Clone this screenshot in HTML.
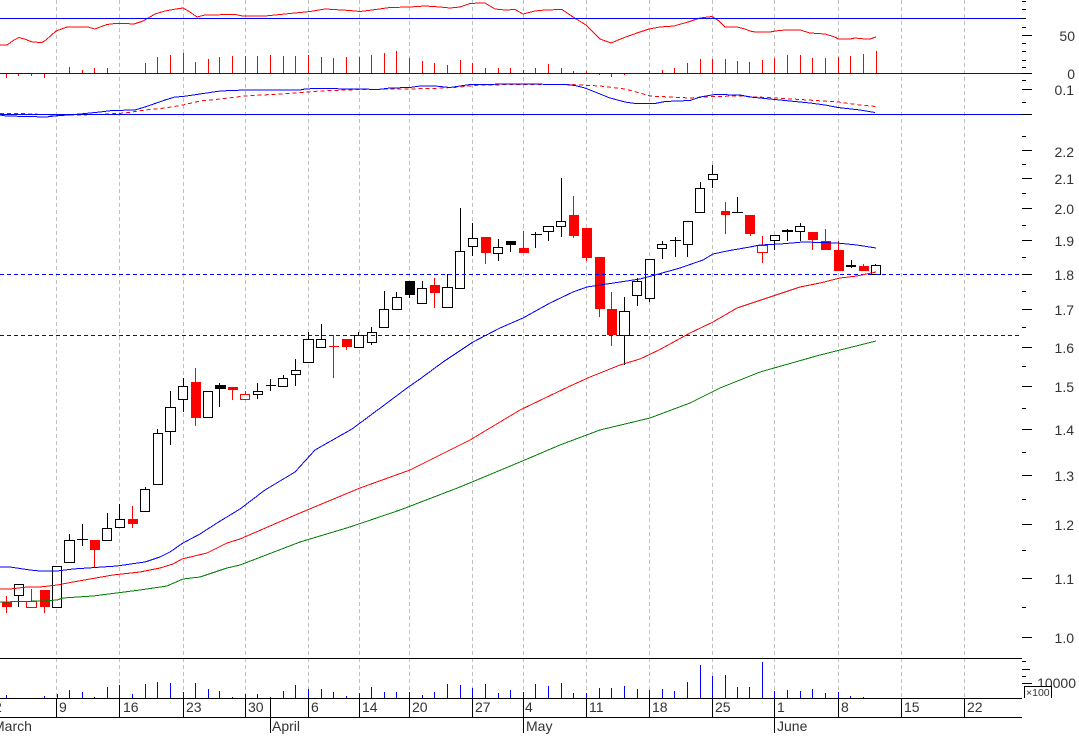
<!DOCTYPE html>
<html>
<head>
<meta charset="utf-8">
<style>
html,body{margin:0;padding:0;background:#fff;width:1079px;height:744px;overflow:hidden}
svg{display:block}
text{font-family:"Liberation Sans",sans-serif;font-size:14px;fill:#333}
</style>
</head>
<body>
<svg width="1079" height="744" viewBox="0 0 1079 744" shape-rendering="crispEdges" fill="none" xmlns="http://www.w3.org/2000/svg">
<!-- grid -->
<path stroke="#c0c0c0" stroke-dasharray="4 3" d="M56.5 0V698M119.5 0V698M183.5 0V698M245.5 0V698M308.5 0V698M359.5 0V698M409.5 0V698M472.5 0V698M523.5 0V698M586.5 0V698M649.5 0V698M712.5 0V698M774.5 0V698M838.5 0V698M901.5 0V698M964.5 0V698"/>
<!-- oscillator bars -->
<path stroke="#f00" d="M6.5 73V78M18.5 73V76M31.5 73V76M44.5 73V78M69.5 73V67M82.5 73V70M94.5 73V68M107.5 73V68M145.5 73V63M157.5 73V57M170.5 73V55M183.5 73V53M195.5 73V62M208.5 73V59M219.5 73V57M232.5 73V56M245.5 73V56M257.5 73V56M270.5 73V55M283.5 73V56M295.5 73V56M308.5 73V55M321.5 73V57M333.5 73V58M346.5 73V57M359.5 73V57M371.5 73V55M384.5 73V53M396.5 73V51M409.5 73V58M422.5 73V61M434.5 73V63M447.5 73V65M460.5 73V60M472.5 73V63M485.5 73V68M498.5 73V68M510.5 73V68M523.5 73V70M535.5 73V68M548.5 73V64M561.5 73V68M573.5 73V71M586.5 73V71M599.5 73V75M611.5 73V77M624.5 73V75M649.5 73V71M662.5 73V70M674.5 73V68M687.5 73V63M700.5 73V59M712.5 73V59M725.5 73V59M737.5 73V61M749.5 73V62M762.5 73V60M774.5 73V58M787.5 73V55M800.5 73V55M812.5 73V58M825.5 73V58M838.5 73V57M850.5 73V56M863.5 73V54M876.5 73V51"/>
<!-- RSI -->
<polyline stroke="#f00" points="0,45 7,45 14,40 19,37.5 26,39.5 32,42 42,42.5 46,40 56,31 67,27 88,27 95,29 107,24.5 115,23.5 125,23.5 134,24 143,21 155,14 165,11 176,9 183,8 190,12 197,17 205,15 235,14.5 243,16 265,16 285,14 310,11.5 325,9 350,10.5 360,11.5 372,10 390,7.5 410,7 425,6 440,7 450,8 460,7 470,3.5 480,3 485,3 495,9 505,10 515,9.5 523,14 535,11 545,10 562,9.5 573,17 586,25 600,39 611,43 623,38 637,33 649,29 660,27 674,26 688,22 700,18 712,16.5 719,21 725,27 737,27 745,29 750,31 755,32 770,32 775,31 785,30 800,30 810,33 825,34 835,37 838,39 850,39 855,38 865,39 870,39 876,37"/>
<!-- MACD -->
<polyline stroke="#f00" stroke-dasharray="4 3" points="0,113.5 20,113.5 55,115 75,115 100,114.5 125,113 145,110 165,108 183,105 200,101 220,99 245,96 280,94 300,92.5 320,91 360,89.5 400,89 435,88.5 460,87 470,86 480,85 520,84.5 570,84.5 600,86 625,89 640,93 650,96 670,97 690,98 712,96.5 740,96 775,98 800,99.5 838,102 860,105 876,106.5"/>
<polyline stroke="#00f" points="0,115 6,116 28,116.5 46,117 55,116 80,114 90,113 100,112 112,110.5 135,110 145,107 165,100 175,97 183,96.5 200,94 220,91 245,90 300,90 305,89 315,88.5 360,89 378,89.5 390,88 410,87.5 420,86 435,86 450,87.5 470,84.5 520,84 565,84.5 575,85.5 585,88 600,94 610,98 625,102 635,103.5 655,103.5 665,101.5 690,100.5 700,97 715,94.5 740,95 750,97 775,99.5 790,101 810,103 825,105 838,107.5 860,110 875,112.5"/>
<path stroke="#00f" d="M0 18.5H1022M0 73.5H1022M0 114.5H1022"/>
<!-- candle wicks -->
<path stroke="#000" d="M18.5 584V607M69.5 534V562M82.5 524V546M77 539.5H88M107.5 513V541M119.5 504V527M145.5 487V511M157.5 429V484M170.5 391V445M183.5 378V412M219.5 383V407M257.5 383V399M270.5 379V391M266 385.5H276M283.5 375V386M295.5 359V386M308.5 332V362M321.5 324V347M358.5 332V347M371.5 327V345M384.5 291V327M396.5 292V309M409.5 281V298M422.5 281V304M447.5 274V307M460.5 208V288M472.5 223V256M498.5 239V261M510.5 241V252M535.5 232V248M531 234.5H542M548.5 226V241M561.5 178V237M624.5 297V365M637.5 278V306M649.5 259V302M662.5 241V259M675.5 237V257M670 240.5H681M687.5 221V257M700.5 182V213M712.5 165V188M737.5 197V212M732 212.5H743M774.5 235V250M787.5 229V241M782 230.5H793M782 231.5H793M800.5 223V241M851.5 260V268M846 265.5H856M846 266.5H856M875.5 264V274"/>
<path stroke="#f00" d="M6.5 596V613M31.5 589V607M44.5 590V613M94.5 540V567M132.5 506V528M195.5 368V426M232.5 387V400M245.5 391V399M333.5 335V378M329 346.5H339M346.5 339V350M434.5 278V308M485.5 237V264M523.5 231V253M573.5 196V238M586.5 228V261M599.5 257V317M611.5 292V346M725.5 202V234M750.5 215V236M762.5 236V263M812.5 232V250M825.5 229V250M838.5 241V271M863.5 264V271"/>
<!-- white bodies -->
<g stroke="#000" fill="#fff">
<rect x="14.5" y="584.5" width="9" height="11"/>
<rect x="52.5" y="566.5" width="9" height="41"/>
<rect x="64.5" y="540.5" width="10" height="22"/>
<rect x="102.5" y="528.5" width="9" height="12"/>
<rect x="115.5" y="519.5" width="9" height="8"/>
<rect x="140.5" y="489.5" width="9" height="22"/>
<rect x="153.5" y="433.5" width="9" height="51"/>
<rect x="165.5" y="407.5" width="10" height="24"/>
<rect x="178.5" y="386.5" width="9" height="13"/>
<rect x="203.5" y="391.5" width="9" height="26"/>
<rect x="253.5" y="391.5" width="9" height="3"/>
<rect x="278.5" y="378.5" width="9" height="8"/>
<rect x="291.5" y="370.5" width="9" height="4"/>
<rect x="303.5" y="339.5" width="10" height="23"/>
<rect x="316.5" y="339.5" width="9" height="8"/>
<rect x="354.5" y="335.5" width="9" height="12"/>
<rect x="367.5" y="332.5" width="9" height="10"/>
<rect x="379.5" y="309.5" width="9" height="18"/>
<rect x="392.5" y="297.5" width="9" height="12"/>
<rect x="417.5" y="288.5" width="9" height="15"/>
<rect x="442.5" y="287.5" width="10" height="20"/>
<rect x="455.5" y="251.5" width="9" height="37"/>
<rect x="468.5" y="238.5" width="9" height="8"/>
<rect x="493.5" y="247.5" width="9" height="6"/>
<rect x="543.5" y="226.5" width="10" height="5"/>
<rect x="556.5" y="221.5" width="9" height="5"/>
<rect x="619.5" y="311.5" width="10" height="24"/>
<rect x="632.5" y="281.5" width="9" height="14"/>
<rect x="645.5" y="259.5" width="9" height="39"/>
<rect x="657.5" y="244.5" width="9" height="4"/>
<rect x="683.5" y="221.5" width="9" height="23"/>
<rect x="695.5" y="188.5" width="9" height="24"/>
<rect x="708.5" y="174.5" width="9" height="5"/>
<rect x="770.5" y="235.5" width="9" height="5"/>
<rect x="795.5" y="226.5" width="9" height="5"/>
<rect x="871.5" y="265.5" width="9" height="9"/>
</g>
<!-- red outline bodies -->
<g stroke="#f00" fill="#fff">
<rect x="26.5" y="601.5" width="10" height="6"/>
<rect x="240.5" y="394.5" width="9" height="5"/>
<rect x="757.5" y="245.5" width="10" height="7"/>
</g>
<!-- red filled bodies -->
<g fill="#f00">
<rect x="2" y="602" width="10" height="5"/>
<rect x="40" y="590" width="10" height="17"/>
<rect x="90" y="540" width="10" height="10"/>
<rect x="128" y="519" width="10" height="5"/>
<rect x="191" y="382" width="10" height="36"/>
<rect x="228" y="387" width="10" height="3"/>
<rect x="342" y="339" width="10" height="8"/>
<rect x="430" y="285" width="10" height="8"/>
<rect x="481" y="237" width="10" height="16"/>
<rect x="519" y="248" width="10" height="5"/>
<rect x="569" y="215" width="10" height="21"/>
<rect x="582" y="228" width="10" height="30"/>
<rect x="595" y="257" width="10" height="52"/>
<rect x="607" y="309" width="10" height="26"/>
<rect x="721" y="211" width="9" height="4"/>
<rect x="745" y="215" width="10" height="19"/>
<rect x="808" y="232" width="10" height="8"/>
<rect x="821" y="241" width="10" height="9"/>
<rect x="834" y="250" width="10" height="21"/>
<rect x="859" y="266" width="10" height="5"/>
</g>
<!-- black filled bodies -->
<g fill="#000">
<rect x="215" y="385" width="11" height="4"/>
<rect x="405" y="281" width="10" height="14"/>
<rect x="506" y="241" width="10" height="4"/>
</g>
<!-- dashed levels -->
<path stroke="#00f" stroke-dasharray="4 3" d="M0 274.5H1022M0 335.5H1022"/>
<!-- moving averages -->
<polyline stroke="#008000" points="0,602 43,601 57,600 63,598 93,596 140,590 167,586 183,579 200,577 227,568 240,565 300,542 350,527 400,510 460,487 520,462 560,445 600,430 650,418 690,403 720,388 760,372 820,355 876,341"/>
<polyline stroke="#f00" points="0,589 10,589 27,587 40,587 57,585 73,582 113,575 140,572 160,568 173,564 182,559 207,553 227,543 240,539 300,513 360,488 410,470 470,440 520,410 568,387 590,377 620,365 640,359 659,350 690,333 713,322 737,308 773,296 800,287 820,283 840,278 857,276 876,272"/>
<polyline stroke="#00f" points="0,567 10,567 30,570 40,571 57,571 73,569 117,566 145,562 160,557 170,552 183,543 200,534 217,523 240,509 265,490 295,472 315,450 352,429 387,403 407,388 420,379 443,362 473,342 500,328 523,318 550,303 573,292 587,287 640,279 655,275 680,268 703,260 713,254 727,251 750,247 760,245 780,244 803,242 837,243 857,245 876,248"/>
<!-- volume -->
<path stroke="#00f" d="M6.5 698V695M44.5 698V696M57.5 698V694M69.5 698V690M82.5 698V692M94.5 698V697M107.5 698V687M119.5 698V685M132.5 698V694M145.5 698V684M157.5 698V682M170.5 698V683M183.5 698V692M195.5 698V683M208.5 698V689M219.5 698V691M232.5 698V697M245.5 698V694M257.5 698V694M270.5 698V697M283.5 698V691M295.5 698V685M308.5 698V689M321.5 698V689M333.5 698V692M346.5 698V696M359.5 698V693M371.5 698V687M384.5 698V692M396.5 698V692M409.5 698V692M422.5 698V695M434.5 698V692M447.5 698V684M460.5 698V685M472.5 698V688M485.5 698V684M498.5 698V693M510.5 698V690M523.5 698V692M535.5 698V684M548.5 698V686M561.5 698V683M573.5 698V693M586.5 698V693M599.5 698V688M611.5 698V688M624.5 698V686M637.5 698V689M649.5 698V690M662.5 698V689M674.5 698V691M687.5 698V682M700.5 698V665M712.5 698V676M725.5 698V675M737.5 698V687M749.5 698V687M762.5 698V662M774.5 698V691M787.5 698V690M800.5 698V691M812.5 698V689M825.5 698V693M838.5 698V692M850.5 698V696M863.5 698V697"/>
<!-- frame lines and axis ticks -->
<path stroke="#000" d="M0 658.5H1022M0 698.5H1022M0 717.5H1022M56.5 698V717M119.5 698V717M183.5 698V717M245.5 698V717M308.5 698V717M359.5 698V717M409.5 698V717M472.5 698V717M523.5 698V733M586.5 698V717M649.5 698V717M712.5 698V717M774.5 698V733M838.5 698V717M901.5 698V717M964.5 698V717M270.5 698V733"/>
<path stroke="#000" d="M1022 1.5H1026M1022 9.5H1026M1022 18.5H1026M1022 27.5H1026M1022 35.5H1032M1022 43.5H1026M1022 51.5H1026M1022 60.5H1026M1022 67.5H1026M1022 73.5H1032M1022 80.5H1026M1022 89.5H1032M1022 102.5H1026M1022 114.5H1032M1022 136.5H1026M1022 150.5H1032M1022 164.5H1026M1022 178.5H1032M1022 193.5H1026M1022 208.5H1032M1022 225.5H1026M1022 240.5H1032M1022 257.5H1026M1022 274.5H1032M1022 291.5H1026M1022 309.5H1032M1022 327.5H1026M1022 347.5H1032M1022 366.5H1026M1022 386.5H1032M1022 408.5H1026M1022 429.5H1032M1022 452.5H1026M1022 475.5H1032M1022 499.5H1026M1022 524.5H1032M1022 550.5H1026M1022 578.5H1032M1022 607.5H1026M1022 637.5H1032M1022 661.5H1026M1022 669.5H1030M1022 676.5H1026M1022 683.5H1032"/>
<!-- right axis labels -->
<g text-anchor="end">
<text x="1075" y="41">50</text>
<text x="1075" y="79">0</text>
<text x="1074" y="95">0.1</text>
<text x="1074" y="157">2.2</text>
<text x="1074" y="184">2.1</text>
<text x="1074" y="214">2.0</text>
<text x="1074" y="246">1.9</text>
<text x="1074" y="280">1.8</text>
<text x="1074" y="315">1.7</text>
<text x="1074" y="353">1.6</text>
<text x="1074" y="392">1.5</text>
<text x="1074" y="435">1.4</text>
<text x="1074" y="481">1.3</text>
<text x="1074" y="530">1.2</text>
<text x="1074" y="584">1.1</text>
<text x="1074" y="643">1.0</text>
<text x="1076" y="688">10000</text>
</g>
<!-- x100 box -->
<rect x="1024.5" y="686.5" width="27" height="14" fill="#fff" stroke="none"/>
<path stroke="#000" d="M1024.5 698V686.5H1051.5V698"/>
<text x="1026" y="696" style="font-size:10.5px">×100</text>
<!-- dates -->
<g>
<text x="-6" y="712">2</text>
<text x="59" y="712">9</text>
<text x="123" y="712">16</text>
<text x="186" y="712">23</text>
<text x="248" y="712">30</text>
<text x="311" y="712">6</text>
<text x="362" y="712">14</text>
<text x="412" y="712">20</text>
<text x="475" y="712">27</text>
<text x="525" y="712">4</text>
<text x="589" y="712">11</text>
<text x="652" y="712">18</text>
<text x="715" y="712">25</text>
<text x="777" y="712">1</text>
<text x="841" y="712">8</text>
<text x="904" y="712">15</text>
<text x="967" y="712">22</text>
<text x="-7" y="731">March</text>
<text x="272" y="731">April</text>
<text x="526" y="731">May</text>
<text x="777" y="731">June</text>
</g>
</svg>
</body>
</html>
